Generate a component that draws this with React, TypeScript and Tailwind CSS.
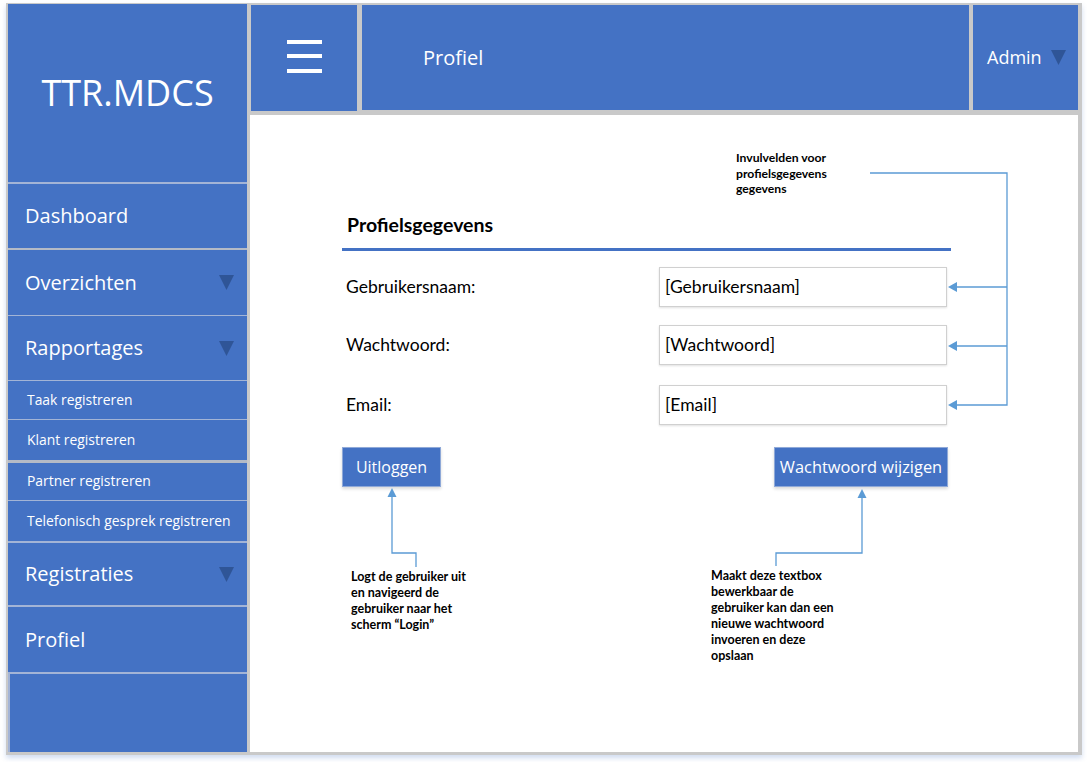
import React from "react";

const seg = { fontFamily: '"Open Sans", "Noto Sans", sans-serif' };
const cal = { fontFamily: 'Lato, "Open Sans", sans-serif' };

function Tri({ className = "" }: { className?: string }) {
  return (
    <svg width="15" height="15" viewBox="0 0 15 15" className={className}>
      <polygon points="0,0 15,0 7.5,15" fill="#2f5597" />
    </svg>
  );
}

function NavItem({
  label,
  h,
  border,
  arrow,
  small,
}: {
  label: string;
  h: string;
  border: string;
  arrow?: boolean;
  small?: boolean;
}) {
  return (
    <div className={`${h} ${border} flex items-center justify-between bg-[#4472c4] text-white`}>
      <span className={small ? "pl-[19px] text-[13.9px]" : "pl-[17px] text-[20px]"} style={seg}>
        {label}
      </span>
      {arrow && <Tri className="mr-[13px]" />}
    </div>
  );
}

function Row({ label, value, mt }: { label: string; value: string; mt: string }) {
  return (
    <div className={`${mt} flex items-center h-[40px]`}>
      <div className="w-[317px] pl-[4px] text-[17.5px] text-black" style={cal}>
        {label}
      </div>
      <div
        className="w-[288px] h-[40px] border border-[#d0d0d0] bg-white flex items-center pl-[5px] text-[17.5px] text-black shadow-[0_1px_2px_rgba(0,0,0,0.12)]"
        style={cal}
      >
        {value}
      </div>
    </div>
  );
}

export default function App() {
  return (
    <div className="relative w-[1087px] h-[762px] bg-white overflow-hidden">
      <div className="ml-[6px] mt-[3px] w-[1076px] h-[752px] bg-[#c9c9c9] flex pl-[2px] pt-[1px] pb-[3px] pr-[4px] shadow-[0_3px_5px_rgba(68,114,196,0.25)]">
        {/* Sidebar */}
        <div className="w-[239px] h-[748px] flex flex-col">
          <div className="h-[178px] bg-[#4472c4] flex items-center justify-center text-white text-[36px]" style={seg}>
            TTR.MDCS
          </div>
          <NavItem label="Dashboard" h="h-[66px]" border="border-t-2 border-[#a3b4d6]" />
          <NavItem label="Overzichten" h="h-[67px]" border="border-t-2 border-[#b4bac6]" arrow />
          <NavItem label="Rapportages" h="h-[65px]" border="border-t border-[#a3b4d6]" arrow />
          <NavItem label="Taak registreren" h="h-[39px]" border="border-t border-[#a3b4d6]" small />
          <NavItem label="Klant registreren" h="h-[41px]" border="border-t border-[#a3b4d6]" small />
          <NavItem label="Partner registreren" h="h-[40px]" border="border-t-[3px] border-[#b4bac6]" small />
          <NavItem label="Telefonisch gesprek registreren" h="h-[41px]" border="border-t border-[#a3b4d6]" small />
          <NavItem label="Registraties" h="h-[64px]" border="border-t-2 border-[#a3b4d6]" arrow />
          <NavItem label="Profiel" h="h-[67px]" border="border-t-2 border-[#a3b4d6]" />
          <div className="h-[80px] bg-[#4472c4] border-t-2 border-l-2 border-[#a3b4d6]" />
        </div>

        {/* Main */}
        <div className="ml-[3px] flex-1 flex flex-col">
          <div className="h-[111px] flex pt-[1px]">
            <div className="ml-[1px] w-[106px] h-[106px] bg-[#4472c4] flex flex-col items-center justify-center gap-[10.5px] pb-[4px]">
              <div className="w-[35px] h-[4px] bg-white" />
              <div className="w-[35px] h-[4px] bg-white" />
              <div className="w-[35px] h-[4px] bg-white" />
            </div>
            <div className="ml-[5px] w-[607px] h-[105px] bg-[#4472c4] flex items-center pl-[61px] text-white text-[20px]" style={seg}>
              Profiel
            </div>
            <div className="ml-[4px] w-[105px] h-[105px] bg-[#4472c4] flex items-center pl-[14px] text-white text-[18px]" style={seg}>
              <span>Admin</span>
              <Tri className="ml-[9px]" />
            </div>
          </div>

          <div className="flex-1 bg-white pl-[92px] pt-[96px]">
            <div className="w-[609px]">
              <div className="h-[30px] flex items-center pl-[5px] pb-[3px] text-[19.5px] font-bold text-black" style={cal}>
                Profielsgegevens
              </div>
              <div className="mt-[7px] h-[3px] bg-[#4472c4]" />
              <Row label="Gebruikersnaam:" value="[Gebruikersnaam]" mt="mt-[16px]" />
              <Row label="Wachtwoord:" value="[Wachtwoord]" mt="mt-[18px]" />
              <Row label="Email:" value="[Email]" mt="mt-[20px]" />
              <div className="mt-[22px] w-[606px] flex justify-between">
                <div className="w-[99px] h-[40px] bg-[#4472c4] border border-[#8fa9d8] flex items-center justify-center text-white text-[16px] shadow-[0_2px_3px_rgba(0,0,0,0.15)]" style={seg}>
                  Uitloggen
                </div>
                <div className="w-[174px] h-[40px] bg-[#4472c4] border border-[#8fa9d8] flex items-center justify-center text-white text-[16.4px] shadow-[0_2px_3px_rgba(0,0,0,0.15)]" style={seg}>
                  Wachtwoord wijzigen
                </div>
              </div>
            </div>
          </div>
        </div>
      </div>

      {/* Connector lines overlay */}
      <svg className="absolute left-0 top-0 pointer-events-none" width="1087" height="762">
        <g stroke="#5b9bd5" strokeWidth="1.3" fill="none">
          <polyline points="870,173 1007,173 1007,405 957,405" />
          <line x1="1007" y1="287" x2="957" y2="287" />
          <line x1="1007" y1="346" x2="957" y2="346" />
          <polyline points="416,567 416,553 392,553 392,496" />
          <polyline points="776,566 776,553 862,553 862,497" />
        </g>
        <g fill="#5b9bd5">
          <polygon points="948,287 957,282 957,292" />
          <polygon points="948,346 957,341 957,351" />
          <polygon points="948,405 957,400 957,410" />
          <polygon points="392,488 387.5,497 396.5,497" />
          <polygon points="862,489 857.5,498 866.5,498" />
        </g>
      </svg>

      {/* Annotations */}
      <div className="absolute left-[736px] top-[150px] text-[12.2px] leading-[15.5px] font-bold text-black" style={cal}>
        Invulvelden voor
        <br />
        profielsgegevens
        <br />
        gegevens
      </div>
      <div className="absolute left-[351px] top-[569px] text-[12.5px] leading-[16px] font-bold text-black" style={cal}>
        Logt de gebruiker uit
        <br />
        en navigeerd de
        <br />
        gebruiker naar het
        <br />
        scherm “Login”
      </div>
      <div className="absolute left-[711px] top-[568px] text-[12.5px] leading-[16px] font-bold text-black" style={cal}>
        Maakt deze textbox
        <br />
        bewerkbaar de
        <br />
        gebruiker kan dan een
        <br />
        nieuwe wachtwoord
        <br />
        invoeren en deze
        <br />
        opslaan
      </div>
    </div>
  );
}
